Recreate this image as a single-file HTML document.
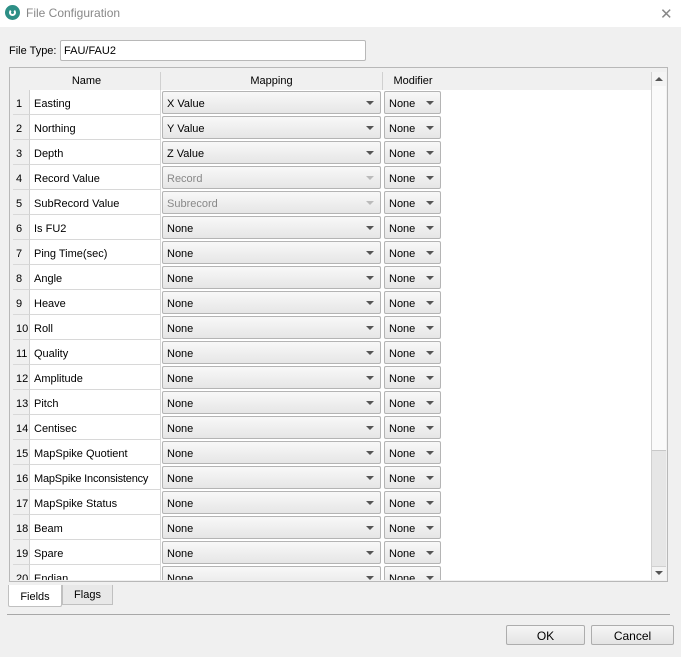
<!DOCTYPE html><html><head><style>
*{box-sizing:border-box}
body{margin:0;width:681px;height:657px;background:#f0f0f0;font-family:"Liberation Sans",sans-serif;font-size:11px;color:#000;position:relative;overflow:hidden}
.a{position:absolute}
.title{left:0;top:0;width:681px;height:27px;background:#fff}
.tbl{left:13px;top:72px;width:638px;height:508px;background:#fff;overflow:hidden}
.r{position:absolute;left:0;width:430px;height:25px}
.n{position:absolute;left:0;width:17px;height:25px;background:#f0f0f0;border-right:1px solid #d0d0d0;border-bottom:1px solid #d8d8d8;padding:8px 0 0 3px}
.nm{position:absolute;left:17px;width:131px;height:25px;border-bottom:1px solid #d8d8d8;border-right:1px solid #d8d8d8;padding:8px 0 0 4px}
.cb{position:absolute;top:1px;height:23px;border:1px solid #b4b4b4;border-radius:2px;background:linear-gradient(#f8f8f8,#e6e6e6);padding:6px 0 0 4px}
.cb:after{content:"";position:absolute;right:6px;top:9px;border-left:4px solid transparent;border-right:4px solid transparent;border-top:4px solid #555}
.m{left:149px;width:219px}
.md{left:371px;width:57px}
.dis{color:#888}.dis:after{border-top-color:#bbb}
.btn{top:625px;height:20px;border:1px solid #adadad;background:linear-gradient(#f6f6f6,#e4e4e4);border-radius:2px;text-align:center;padding-top:3px;font-size:12px}
</style></head><body>
<div class="a title"></div>
<div class="a" style="left:5px;top:5px;width:15px;height:15px;border-radius:50%;background:#2d8f86"></div>
<div class="a" style="left:9px;top:9px;width:7px;height:7px;border:2px solid #fff;border-top-color:transparent;border-radius:50%"></div>
<div class="a" style="left:26px;top:6px;font-size:12px;color:#888">File Configuration</div>
<div class="a" style="left:660px;top:5px;font-size:15px;color:#888">✕</div>
<div class="a" style="left:9px;top:45px">File Type:</div>
<div class="a" style="left:60px;top:40px;width:306px;height:21px;background:#fff;border:1px solid #b8b8b8;border-radius:2px;padding:4px 0 0 3px">FAU/FAU2</div>
<div class="a" style="left:9px;top:67px;width:659px;height:515px;border:1px solid #b8b8b8;background:#f0f0f0"></div>
<div class="a tbl">
<div class="a" style="left:0;top:0;width:638px;height:18px;background:#f0f0f0"></div>
<div class="a" style="left:0;top:0;width:148px;height:18px;border-right:1px solid #d0d0d0;text-align:center;padding-top:3px">Name</div>
<div class="a" style="left:148px;top:0;width:222px;height:18px;border-right:1px solid #d0d0d0;text-align:center;padding-top:3px">Mapping</div>
<div class="a" style="left:370px;top:0;width:60px;height:18px;text-align:center;padding-top:3px">Modifier</div>
<div class="r" style="top:18px"><div class="n">1</div><div class="nm">Easting</div><div class="cb m">X Value</div><div class="cb md">None</div></div>
<div class="r" style="top:43px"><div class="n">2</div><div class="nm">Northing</div><div class="cb m">Y Value</div><div class="cb md">None</div></div>
<div class="r" style="top:68px"><div class="n">3</div><div class="nm">Depth</div><div class="cb m">Z Value</div><div class="cb md">None</div></div>
<div class="r" style="top:93px"><div class="n">4</div><div class="nm">Record Value</div><div class="cb m dis">Record</div><div class="cb md">None</div></div>
<div class="r" style="top:118px"><div class="n">5</div><div class="nm">SubRecord Value</div><div class="cb m dis">Subrecord</div><div class="cb md">None</div></div>
<div class="r" style="top:143px"><div class="n">6</div><div class="nm">Is FU2</div><div class="cb m">None</div><div class="cb md">None</div></div>
<div class="r" style="top:168px"><div class="n">7</div><div class="nm">Ping Time(sec)</div><div class="cb m">None</div><div class="cb md">None</div></div>
<div class="r" style="top:193px"><div class="n">8</div><div class="nm">Angle</div><div class="cb m">None</div><div class="cb md">None</div></div>
<div class="r" style="top:218px"><div class="n">9</div><div class="nm">Heave</div><div class="cb m">None</div><div class="cb md">None</div></div>
<div class="r" style="top:243px"><div class="n">10</div><div class="nm">Roll</div><div class="cb m">None</div><div class="cb md">None</div></div>
<div class="r" style="top:268px"><div class="n">11</div><div class="nm">Quality</div><div class="cb m">None</div><div class="cb md">None</div></div>
<div class="r" style="top:293px"><div class="n">12</div><div class="nm">Amplitude</div><div class="cb m">None</div><div class="cb md">None</div></div>
<div class="r" style="top:318px"><div class="n">13</div><div class="nm">Pitch</div><div class="cb m">None</div><div class="cb md">None</div></div>
<div class="r" style="top:343px"><div class="n">14</div><div class="nm">Centisec</div><div class="cb m">None</div><div class="cb md">None</div></div>
<div class="r" style="top:368px"><div class="n">15</div><div class="nm">MapSpike Quotient</div><div class="cb m">None</div><div class="cb md">None</div></div>
<div class="r" style="top:393px"><div class="n">16</div><div class="nm" style="letter-spacing:-0.2px">MapSpike Inconsistency</div><div class="cb m">None</div><div class="cb md">None</div></div>
<div class="r" style="top:418px"><div class="n">17</div><div class="nm">MapSpike Status</div><div class="cb m">None</div><div class="cb md">None</div></div>
<div class="r" style="top:443px"><div class="n">18</div><div class="nm">Beam</div><div class="cb m">None</div><div class="cb md">None</div></div>
<div class="r" style="top:468px"><div class="n">19</div><div class="nm">Spare</div><div class="cb m">None</div><div class="cb md">None</div></div>
<div class="r" style="top:493px"><div class="n">20</div><div class="nm">Endian</div><div class="cb m">None</div><div class="cb md">None</div></div>
</div>
<div class="a" style="left:651px;top:72px;width:15px;height:508px;background:#e6e6e6;border-left:1px solid #d0d0d0"></div>
<div class="a" style="left:652px;top:86px;width:14px;height:365px;background:#fafafa;border-bottom:1px solid #c8c8c8"></div>
<div class="a" style="left:652px;top:72px;width:14px;height:14px;background:#f4f4f4"></div>
<div class="a" style="left:655px;top:77px;border-left:4px solid transparent;border-right:4px solid transparent;border-bottom:4px solid #555"></div>
<div class="a" style="left:652px;top:566px;width:14px;height:14px;background:#f4f4f4;border-top:1px solid #d0d0d0"></div>
<div class="a" style="left:655px;top:571px;border-left:4px solid transparent;border-right:4px solid transparent;border-top:4px solid #555"></div>
<div class="a" style="left:8px;top:585px;width:54px;height:22px;background:#fff;border:1px solid #c0c0c0;border-top:none;border-radius:0 0 2px 2px;text-align:center;padding-top:6px">Fields</div>
<div class="a" style="left:62px;top:585px;width:51px;height:20px;background:#e8e8e8;border:1px solid #c0c0c0;border-top:none;text-align:center;padding-top:4px">Flags</div>
<div class="a" style="left:7px;top:614px;width:663px;height:1px;background:#a8a8a8"></div>
<div class="a btn" style="left:506px;width:79px">OK</div>
<div class="a btn" style="left:591px;width:83px">Cancel</div>
</body></html>
